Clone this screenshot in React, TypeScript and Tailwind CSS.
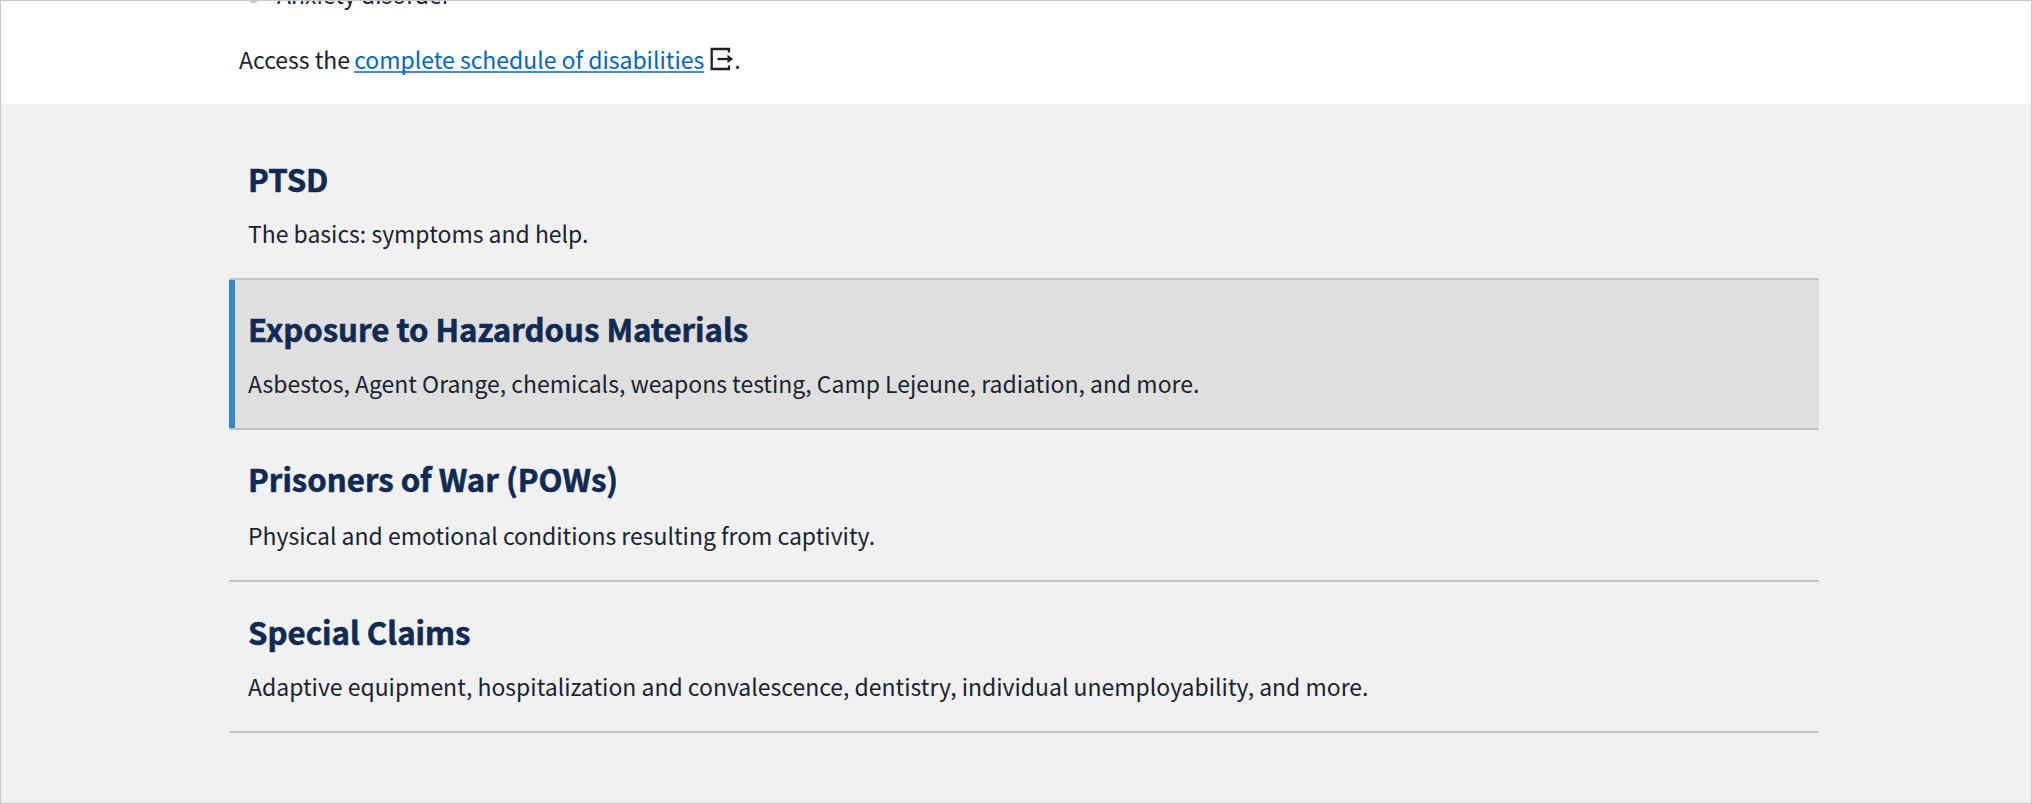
type Item = { title: string; text: string; box: string; gap: string };

const items: Item[] = [
  {
    title: "PTSD",
    text: "The basics: symptoms and help.",
    box: "h-[151px] pt-[27px] pl-[19px] border-[#c4c4c4]",
    gap: "mt-[14px]",
  },
  {
    title: "Exposure to Hazardous Materials",
    text: "Asbestos, Agent Orange, chemicals, weapons testing, Camp Lejeune, radiation, and more.",
    box: "h-[150px] pt-[26px] pl-[19px] border-[#c0c0c0] bg-[linear-gradient(to_right,#2e8bc6_6px,#dfdfdf_6px)]",
    gap: "mt-[14px]",
  },
  {
    title: "Prisoners of War (POWs)",
    text: "Physical and emotional conditions resulting from captivity.",
    box: "h-[152px] pt-[26px] pl-[19px] border-[#c4c4c4]",
    gap: "mt-[16px]",
  },
  {
    title: "Special Claims",
    text: "Adaptive equipment, hospitalization and convalescence, dentistry, individual unemployability, and more.",
    box: "h-[151px] pt-[27px] pl-[19px] border-[#c4c4c4]",
    gap: "mt-[14px]",
  },
];

function ExitIcon() {
  return (
    <svg className="ml-[6px] h-[24px] w-[24px] shrink-0" viewBox="0 0 24 24" fill="none" stroke="#212121" strokeWidth="2.3">
      <path d="M19 5.5V2H1.7V22H19V18.5" />
      <path d="M7.5 12H19" />
      <path d="M17.5 7.8L23.2 12L17.5 16.2Z" fill="#212121" stroke="none" />
    </svg>
  );
}

export default function App() {
  return (
    <div className="h-[804px] w-[2032px] overflow-hidden border border-[#c8c8c8] bg-[#f1f1f1] font-['Noto_Sans_CJK_SC',sans-serif] text-[22.985px] leading-[36px] text-[#1b2230]">
      <div className="h-[103px] overflow-hidden bg-white pl-[238px]">
        <div className="-mt-[25px] flex items-center pl-[11px]">
          <span className="mt-[10px] mr-[20px] h-[8px] w-[7px] rounded-[2px] bg-[#c8c8c8]" />
          Anxiety disorder
        </div>
        <p className="mt-[29px] flex items-center">
          Access the&nbsp;
          <a href="#" className="-ml-px text-[#0068bd] underline decoration-[#4f87cb] decoration-2 underline-offset-[2px] [text-decoration-skip-ink:none]">
            complete schedule of disabilities
          </a>
          <span className="-mt-px flex">
            <ExitIcon />
          </span>
          .
        </p>
      </div>
      <div className="mt-[25px] ml-[228px] w-[1590px]">
        {items.map((it) => (
          <section key={it.title} className={`border-b-2 ${it.box}`}>
            <h2 className="text-[31.18px] leading-[45px] font-bold text-[#112a53] [-webkit-text-stroke:0.6px_#112a53]">{it.title}</h2>
            <p className={it.gap}>{it.text}</p>
          </section>
        ))}
      </div>
    </div>
  );
}
